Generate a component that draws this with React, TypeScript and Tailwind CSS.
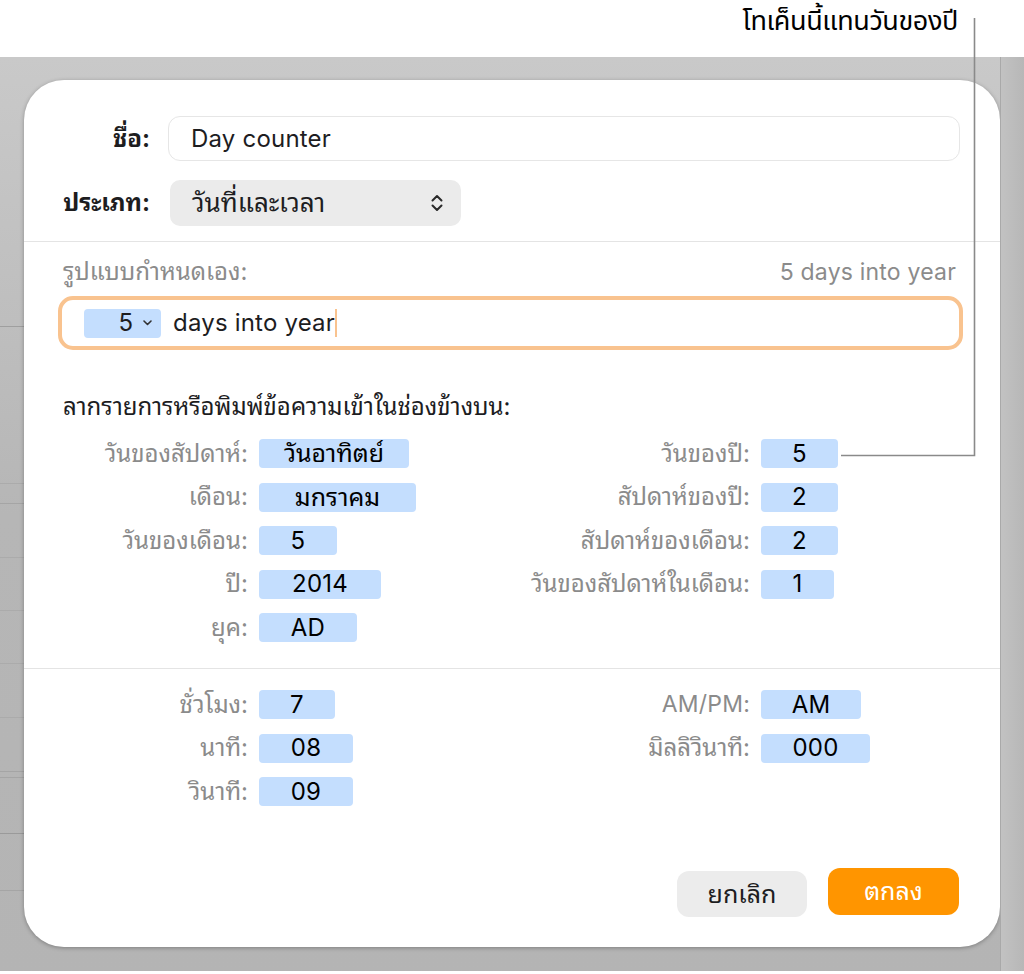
import React from "react";

const FONT = {
  fontFamily:
    '"Inter", "Noto Sans Thai Looped", "Waree", "Loma", "Garuda", "Noto Sans Thai", "Noto Sans", "DejaVu Sans", sans-serif',
};
const CAPTION_FONT = {
  fontFamily: '"Noto Sans Thai", "Noto Sans", sans-serif',
};

const isThai = (s: string) => /[\u0E00-\u0E7F]/.test(s);

function Token({ w, children }: { w: string; children: string }) {
  return (
    <div
      className={
        "h-[29px] rounded-[4px] bg-[#c4defe] flex items-center justify-center text-black leading-none " +
        (isThai(children) ? "text-[25px] " : "text-[24px] tracking-[0.2px] ") +
        w
      }
    >
      {children}
    </div>
  );
}

function Row({
  label,
  labelW,
  tokenW,
  value,
}: {
  label: string;
  labelW: string;
  tokenW: string;
  value: string;
}) {
  return (
    <div className="flex items-center h-[29px]">
      <div
        className={
          "text-right text-[#8b8b8b] pr-[11px] leading-none whitespace-nowrap " +
          (isThai(label) ? "text-[24px] " : "text-[23px] tracking-[0.2px] ") +
          labelW
        }
      >
        {label}
      </div>
      <Token w={tokenW}>{value}</Token>
    </div>
  );
}

export default function App() {
  const leftRows = [
    { label: "วันของสัปดาห์:", value: "วันอาทิตย์", w: "w-[150px]" },
    { label: "เดือน:", value: "มกราคม", w: "w-[157px]" },
    { label: "วันของเดือน:", value: "5", w: "w-[78px]" },
    { label: "ปี:", value: "2014", w: "w-[122px]" },
    { label: "ยุค:", value: "AD", w: "w-[98px]" },
  ];
  const rightRows = [
    { label: "วันของปี:", value: "5", w: "w-[77px]" },
    { label: "สัปดาห์ของปี:", value: "2", w: "w-[77px]" },
    { label: "สัปดาห์ของเดือน:", value: "2", w: "w-[77px]" },
    { label: "วันของสัปดาห์ในเดือน:", value: "1", w: "w-[73px]" },
  ];
  const timeLeft = [
    { label: "ชั่วโมง:", value: "7", w: "w-[76px]" },
    { label: "นาที:", value: "08", w: "w-[94px]" },
    { label: "วินาที:", value: "09", w: "w-[94px]" },
  ];
  const timeRight = [
    { label: "AM/PM:", value: "AM", w: "w-[100px]" },
    { label: "มิลลิวินาที:", value: "000", w: "w-[109px]" },
  ];
  const stripRows = [
    "h-[270px] border-b border-[#9f9f9f]",
    "h-[157px] border-b border-[#ababab]",
    "h-[20px] border-b border-[#a5a5a5]",
    "h-[54px] border-b border-[#ababab]",
    "h-[53px] border-b border-[#ababab]",
    "h-[53px] border-b border-[#ababab]",
    "h-[54px] border-b border-[#ababab]",
    "h-[54px] border-b border-[#a5a5a5]",
    "h-[6px] border-b border-[#a5a5a5]",
    "h-[56px] border-b border-[#9a9a9a]",
    "h-[57px] border-b border-[#a5a5a5]",
  ];

  return (
    <div
      className="relative w-[1024px] h-[974px] bg-white overflow-hidden text-[#1d1d1f]"
      style={FONT}
    >
      {/* caption */}
      <div className="h-[57px] flex items-start justify-end pr-[66px] pt-[3px]">
        <span className="text-[27px] leading-[38px] text-black tracking-[-0.4px]" style={CAPTION_FONT}>
          โทเค็นนี้แทนวันของปี
        </span>
      </div>

      {/* gray backdrop */}
      <div className="h-[914px] flex bg-gradient-to-b from-[#c9c9c9] via-[#b6b6b6] to-[#b4b4b4]">
        <div className="w-[24px] flex flex-col">
          {stripRows.map((c, i) => (
            <div key={i} className={c} />
          ))}
        </div>

        {/* dialog */}
        <div className="w-[976px] mt-[23px] h-[867px] bg-white rounded-[40px] shadow-[0_1px_4px_rgba(0,0,0,0.3)] flex flex-col">
          {/* name */}
          <div className="flex items-center pt-[36px] pr-[40px]">
            <div className="w-[126px] text-right text-[24px] leading-none font-bold text-[#1d1d1f]">ชื่อ:</div>
            <div className="ml-[18px] flex-1 h-[45px] rounded-[12px] border border-[#e6e6e6] flex items-center pl-[22px] text-[24px] tracking-[0.2px] text-[#1d1d1f]">
              Day counter
            </div>
          </div>
          {/* type */}
          <div className="flex items-center mt-[19px]">
            <div className="w-[126px] text-right text-[24px] leading-none font-bold text-[#1d1d1f]">ประเภท:</div>
            <div className="ml-[20px] w-[291px] h-[46px] rounded-[10px] bg-[#ebebeb] flex items-center justify-between pl-[22px] pr-[17px] text-[26px] leading-none text-[#1d1d1f]">
              <span>วันที่และเวลา</span>
              <svg width="14" height="20" viewBox="0 0 14 20" fill="none">
                <path d="M2.5 7.5 L7 3 L11.5 7.5" stroke="#2a2a2a" strokeWidth="2" strokeLinecap="round" strokeLinejoin="round" />
                <path d="M2.5 12.5 L7 17 L11.5 12.5" stroke="#2a2a2a" strokeWidth="2" strokeLinecap="round" strokeLinejoin="round" />
              </svg>
            </div>
          </div>

          <div className="mt-[15px] h-px bg-[#e4e4e4]" />

          {/* custom format */}
          <div className="mt-[17px] flex items-center justify-between pl-[39px] pr-[44px] text-[24px] leading-[26px] text-[#8b8b8b]">
            <span>รูปแบบกำหนดเอง:</span>
            <span className="text-[23px] tracking-[0.2px]">5 days into year</span>
          </div>
          <div className="mt-[11px] ml-[34px] w-[905px] h-[54px] rounded-[15px] border-[4px] border-[#f9c38f] flex items-center pl-[22px]">
            <div className="h-[29px] w-[77px] rounded-[4px] bg-[#c4defe] flex items-center justify-end pr-[9px] gap-[10px] text-[24px] text-[#1d1d1f]">
              <span>5</span>
              <svg width="9" height="6" viewBox="0 0 9 6" fill="none">
                <path d="M1 1 L4.5 4.5 L8 1" stroke="#333" strokeWidth="1.6" strokeLinecap="round" strokeLinejoin="round" />
              </svg>
            </div>
            <span className="ml-[12px] text-[24px] tracking-[0.2px] text-[#1d1d1f]">days into year</span>
            <span className="w-[2px] h-[28px] bg-[#f9c38f]" />
          </div>

          {/* drag hint */}
          <div className="mt-[44px] pl-[39px] text-[24px] leading-[26px] text-[#1d1d1f] whitespace-nowrap">
            ลากรายการหรือพิมพ์ข้อความเข้าในช่องข้างบน:
          </div>

          <div className="mt-[19px] flex pl-[39px]">
            <div className="w-[457px] flex flex-col gap-[14.5px]">
              {leftRows.map((r) => (
                <Row key={r.label} label={r.label} labelW="w-[196px]" tokenW={r.w} value={r.value} />
              ))}
            </div>
            <div className="flex flex-col gap-[14.5px]">
              {rightRows.map((r) => (
                <Row key={r.label} label={r.label} labelW="w-[241px]" tokenW={r.w} value={r.value} />
              ))}
            </div>
          </div>

          <div className="mt-[26px] h-px bg-[#e4e4e4]" />

          <div className="mt-[21px] flex pl-[39px]">
            <div className="w-[457px] flex flex-col gap-[14.5px]">
              {timeLeft.map((r) => (
                <Row key={r.label} label={r.label} labelW="w-[196px]" tokenW={r.w} value={r.value} />
              ))}
            </div>
            <div className="flex flex-col gap-[14.5px]">
              {timeRight.map((r) => (
                <Row key={r.label} label={r.label} labelW="w-[241px]" tokenW={r.w} value={r.value} />
              ))}
            </div>
          </div>

          {/* buttons */}
          <div className="mt-auto flex justify-end items-end gap-[21px] pr-[41px] pb-[30px]">
            <button className="w-[130px] h-[46px] rounded-[12px] bg-[#ececec] text-[25px] leading-none text-[#1d1d1f]">
              ยกเลิก
            </button>
            <button className="w-[131px] h-[47px] mb-[2px] rounded-[12px] bg-[#ff9500] text-[25px] leading-none text-white">
              ตกลง
            </button>
          </div>
        </div>

        <div className="w-[24px] border-l border-[#a9a9a9] bg-gradient-to-r from-[#c2c2c2] to-[#b7b7b7]" />
      </div>
      <div className="h-[3px] bg-white" />

      {/* annotation leader line */}
      <svg className="absolute inset-0 pointer-events-none" width="1024" height="974">
        <path d="M974.5 18 V455.5 H841" stroke="#8a8a8a" strokeWidth="1.6" fill="none" />
      </svg>
    </div>
  );
}
